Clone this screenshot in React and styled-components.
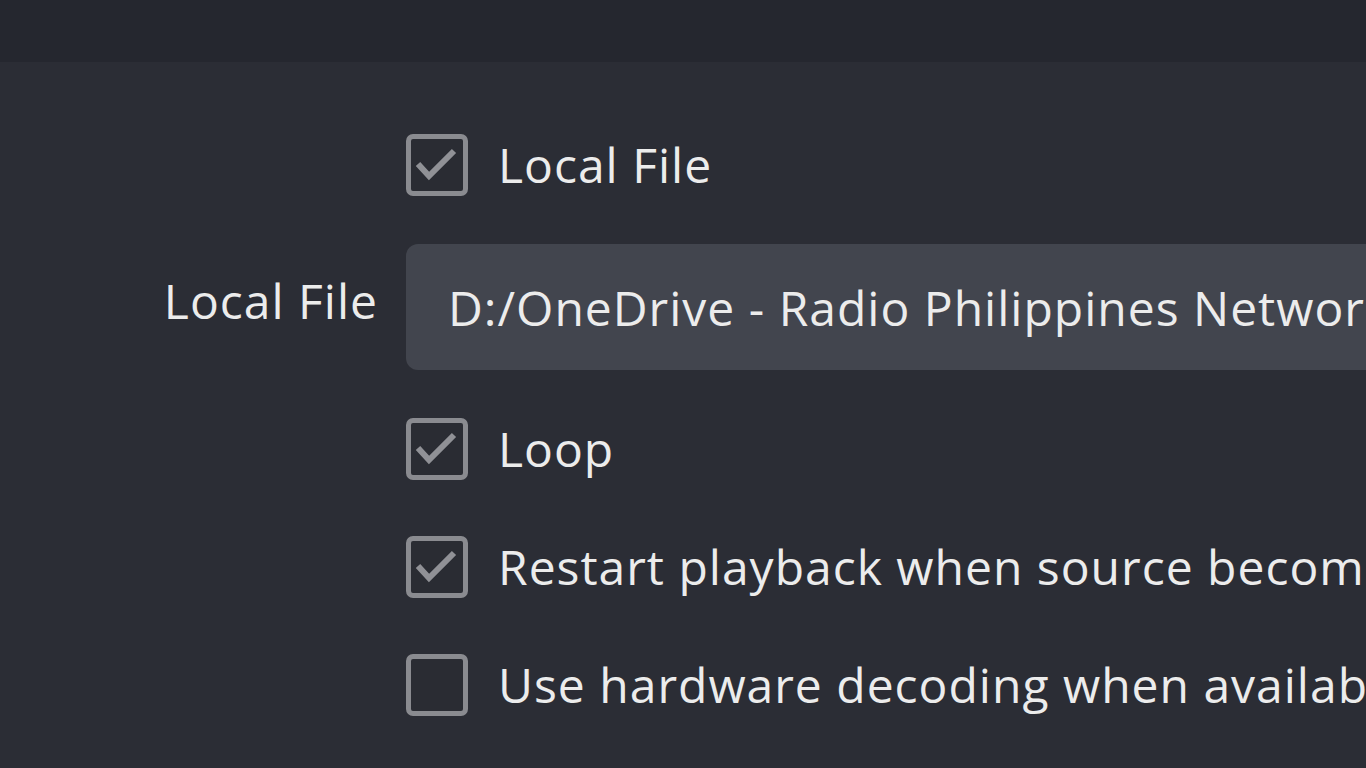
import React from "react";
import styled, { createGlobalStyle } from "styled-components";

const GlobalStyle = createGlobalStyle`
  html, body {
    margin: 0;
    padding: 0;
    width: 1366px;
    height: 768px;
    overflow: hidden;
    background: #2b2d35;
  }
`;

const Page = styled.div`
  display: flex;
  flex-direction: column;
  width: 1366px;
  height: 768px;
  overflow: hidden;
  background: #2b2d35;
  font-family: "Open Sans", "Noto Sans", sans-serif;
  font-size: 48px;
  letter-spacing: 1px;
  color: #ececec;
`;

const TopBar = styled.div`
  height: 62px;
  flex-shrink: 0;
  background: #25272f;
`;

const Form = styled.div`
  display: flex;
  flex-direction: column;
  padding-top: 72px;
`;

const Row = styled.div`
  display: grid;
  grid-template-columns: 378px 2000px;
  column-gap: 28px;
  align-items: center;
  margin-top: ${(p) => p.$gap || 0}px;
`;

const Label = styled.div`
  text-align: right;
  white-space: nowrap;
  padding-bottom: 14px;
`;

const CheckRow = styled.label`
  display: flex;
  align-items: center;
  gap: 30px;
  height: 62px;
  white-space: nowrap;
`;

const Box = styled.span`
  width: 62px;
  height: 62px;
  box-sizing: border-box;
  border: 5px solid #8a8b90;
  border-radius: 7px;
  background: #2a2c33;
  display: flex;
  align-items: center;
  justify-content: center;
  flex-shrink: 0;
`;

const Text = styled.span`
  line-height: 62px;
`;

const Field = styled.div`
  height: 126px;
  box-sizing: border-box;
  background: #42454e;
  border-radius: 12px;
  display: flex;
  align-items: center;
  padding-left: 42px;
  white-space: nowrap;
`;

function Check({ checked }) {
  return (
    <Box>
      {checked && (
        <svg width="52" height="52" viewBox="0 0 52 52">
          <path
            d="M7 25 L18 37 L43 12"
            fill="none"
            stroke="#909196"
            strokeWidth="6"
            strokeLinejoin="miter"
          />
        </svg>
      )}
    </Box>
  );
}

function CheckField({ checked, children, gap }) {
  return (
    <Row $gap={gap}>
      <span />
      <CheckRow>
        <Check checked={checked} />
        <Text>{children}</Text>
      </CheckRow>
    </Row>
  );
}

export default function App() {
  return (
    <Page>
      <GlobalStyle />
      <TopBar />
      <Form>
        <CheckField checked>Local File</CheckField>
        <Row $gap={48}>
          <Label>Local File</Label>
          <Field>D:/OneDrive - Radio Philippines Network/Videos/Loop.mp4</Field>
        </Row>
        <CheckField checked gap={48}>Loop</CheckField>
        <CheckField checked gap={56}>Restart playback when source becomes active</CheckField>
        <CheckField gap={56}>Use hardware decoding when available</CheckField>
      </Form>
    </Page>
  );
}
